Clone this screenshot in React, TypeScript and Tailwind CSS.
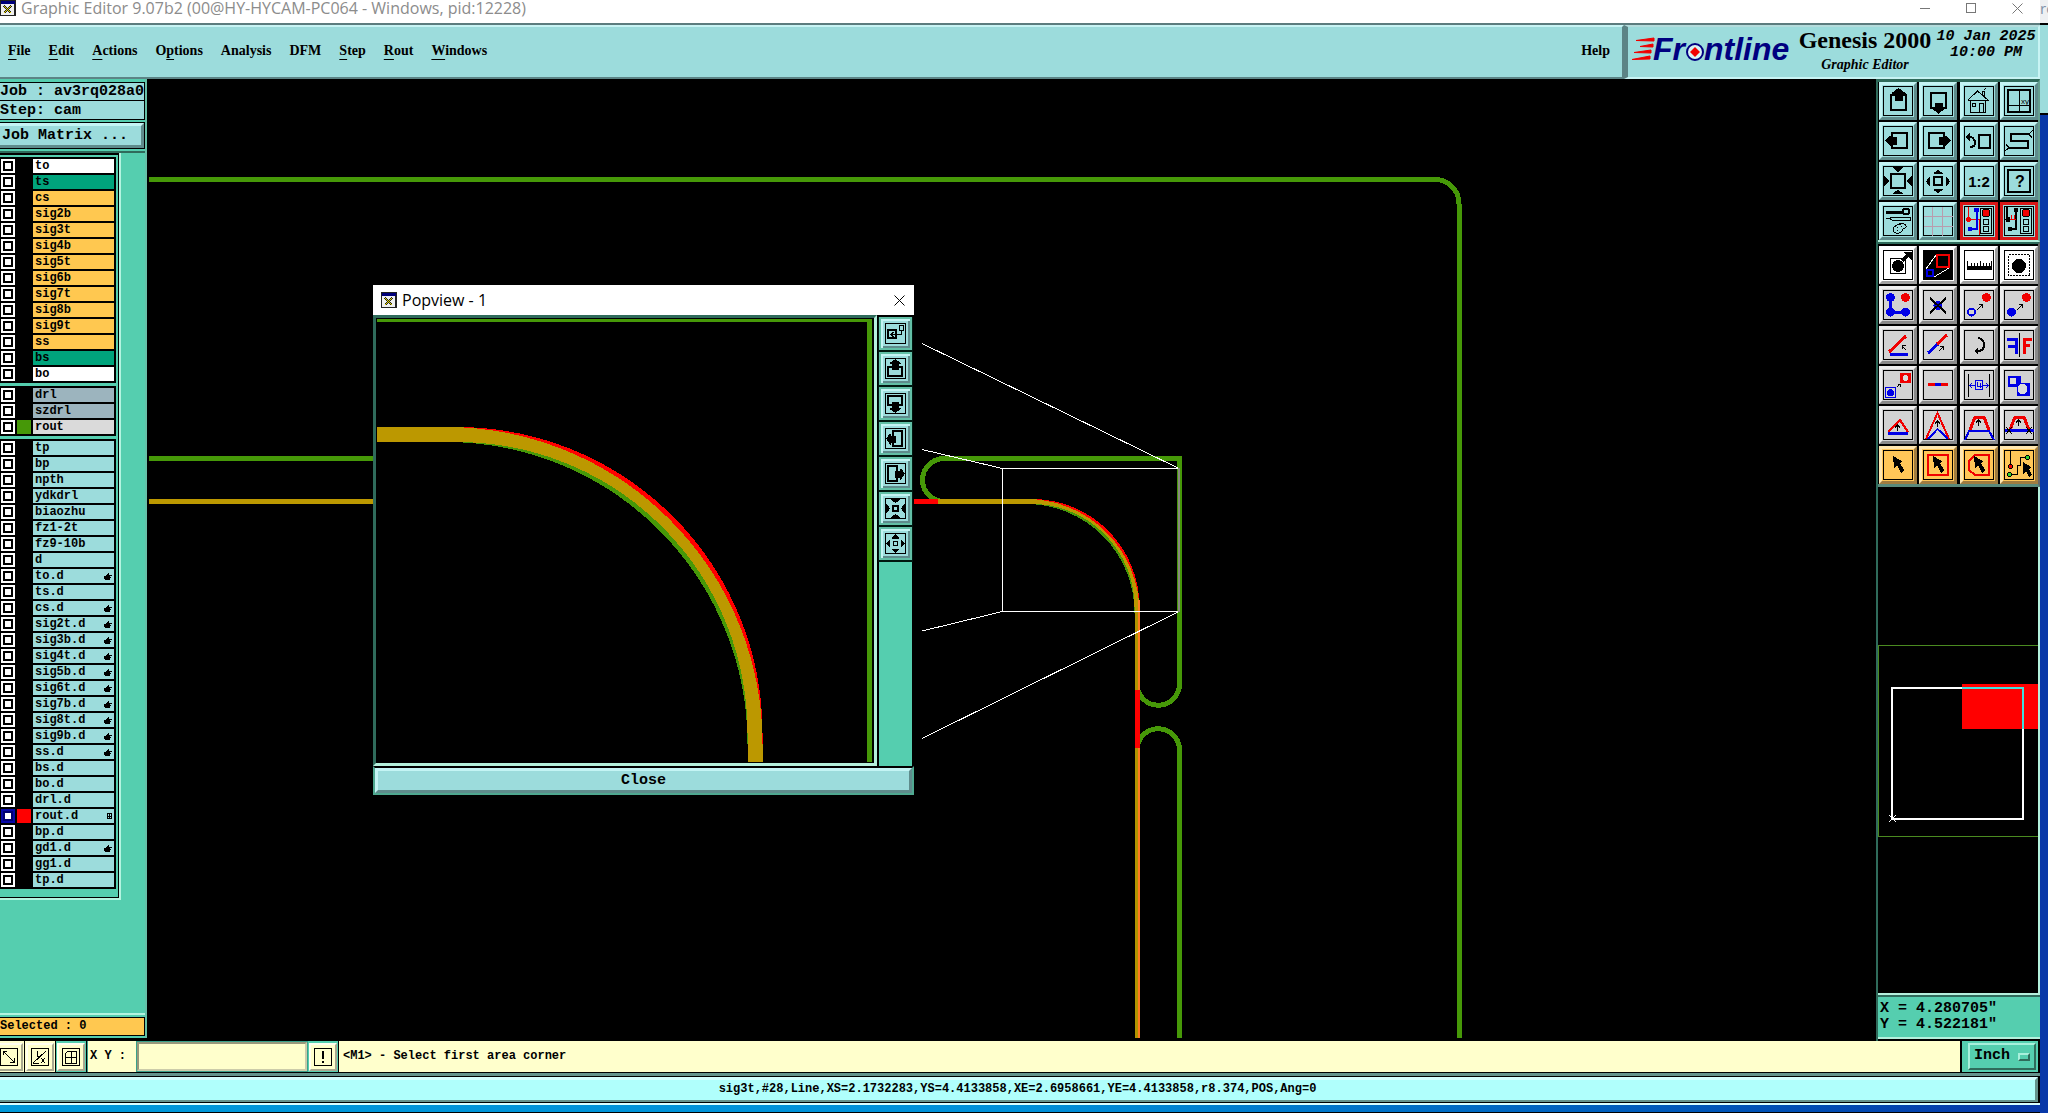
import { type ReactNode } from "react";
import clsx from "clsx";

type Layer = {
  name: string;
  tone?: "white" | "green" | "orange" | "slate" | "gray";
  swatch?: "green" | "red";
  mark?: "hand" | "grid";
  active?: boolean;
};

const tones = {
  white: "bg-white",
  green: "bg-[#00a47c]",
  orange: "bg-[#ffc850]",
  slate: "bg-[#9cb4be]",
  gray: "bg-[#dadada]",
};

const orange = (name: string): Layer => ({ name, tone: "orange" });
const hand = (name: string): Layer => ({ name, mark: "hand" });

const layerGroups: Layer[][] = [
  [
    { name: "to", tone: "white" },
    { name: "ts", tone: "green" },
    ...["cs", "sig2b", "sig3t", "sig4b", "sig5t", "sig6b", "sig7t", "sig8b", "sig9t", "ss"].map(orange),
    { name: "bs", tone: "green" },
    { name: "bo", tone: "white" },
  ],
  [
    { name: "drl", tone: "slate" },
    { name: "szdrl", tone: "slate" },
    { name: "rout", tone: "gray", swatch: "green" },
  ],
  [
    { name: "tp" },
    { name: "bp" },
    { name: "npth" },
    { name: "ydkdrl" },
    { name: "biaozhu" },
    { name: "fz1-2t" },
    { name: "fz9-10b" },
    { name: "d" },
    hand("to.d"),
    { name: "ts.d" },
    ...["cs.d", "sig2t.d", "sig3b.d", "sig4t.d", "sig5b.d", "sig6t.d", "sig7b.d", "sig8t.d", "sig9b.d", "ss.d"].map(hand),
    { name: "bs.d" },
    { name: "bo.d" },
    { name: "drl.d" },
    { name: "rout.d", swatch: "red", mark: "grid", active: true },
    { name: "bp.d" },
    hand("gd1.d"),
    { name: "gg1.d" },
    { name: "tp.d" },
  ],
];

const menus: [string, number][] = [
  ["File", 0],
  ["Edit", 0],
  ["Actions", 0],
  ["Options", 1],
  ["Analysis", -1],
  ["DFM", -1],
  ["Step", 0],
  ["Rout", 0],
  ["Windows", 0],
];

const RED = "#f00000";
const BLUE = "#0000e6";

/* ---------- icon parts ---------- */

function Box({ x, y, w, h, s = 2, c = "#000", f = "none" }: { x: number; y: number; w: number; h: number; s?: number; c?: string; f?: string }) {
  return <rect x={x} y={y} width={w} height={h} stroke={c} strokeWidth={s} fill={f} />;
}

function Line({ d, c = "#000", s = 1 }: { d: string; c?: string; s?: number }) {
  return <path d={d} stroke={c} strokeWidth={s} fill="none" />;
}

function Dot({ x, y, r, c = "#000" }: { x: number; y: number; r: number; c?: string }) {
  return <circle cx={x} cy={y} r={r} fill={c} />;
}

const cursor = <path d="M14 10l9 5-2 2 4 7-3 3-4-8-3 3z" />;

function TrafficLight() {
  return (
    <>
      <Box x={20.5} y={6.5} w={11} h={25} s={1} />
      <circle cx={26} cy={11} r={4} fill={RED} stroke="#000" />
      <circle cx={26} cy={20} r={3} fill="none" stroke="#000" />
      <circle cx={26} cy={27} r={3} fill="none" stroke="#000" />
    </>
  );
}

const viewTools: [string, ReactNode][] = [
  ["Pan up", <><Box x={12} y={13} w={15} h={15} /><path d="M19.500 6l7 5v1h-3v7h-8v-7h-3v-1z" /></>],
  ["Pan down", <><Box x={12} y={11} w={15} h={15} /><path d="M15.500 21h8v4h3v1l-7 6-7-6v-1h3z" /></>],
  ["Home", <><Line d="M8 18.500h21M8 18L17.500 9 28 18M10.500 18v12.500h15V18M12.500 21.500h3v3h-3zM19.500 30v-8.500h4V30M22.500 13V9.500h2V15M24 8l2-2" /></>],
  ["Coordinates", <><Box x={8} y={8} w={22} h={22} /><Line d="M19.500 8v22M8 23.500h22" /><text x={21} y={22} fontSize={8} className="font-['Liberation_Sans']">xy</text></>],
  ["Pan left", <><Box x={13} y={11} w={15} h={15} /><path d="M6 18.500l5-5h1v1h6v8h-6v1h-1z" /></>],
  ["Pan right", <><Box x={10} y={11} w={15} h={15} /><path d="M32 18.500l-5-5h-1v1h-6v8h6v1h1z" /></>],
  ["Previous view", <><Box x={19} y={13} w={11} h={13} /><Line d="M8 15h3q4 2 4 6 0 4-5 4" s={2} /><path d="M5 15l5-5v10z" /></>],
  ["Serpentine", <><Line d="M30 12H11v7h17v7H9" s={2} /><Line d="M29 12l4-4M29 12l3 4M9 26l-4 3M9 26l-3-4" /></>],
  ["Zoom out", <><Box x={12} y={12} w={14} h={14} /><path d="M14 5h10v1l-5 4-5-4zM14 32h10v-1l-5-3-5 3zM5 14v10h1l4-5-4-5zM33 14v10h-1l-4-5 4-5z" /></>],
  ["Zoom in", <><Box x={15} y={15} w={8} h={8} /><path d="M14.500 12h9v-1l-4.500-3-4.500 3zM14.500 27h9v1l-4.500 3-4.500-3zM11 15v9h-1l-3-4.500 3-4.500zM27 15v9h1l3-4.500-3-4.500z" /></>],
  ["Zoom 1:2", <text x={19} y={25} fontSize={15} textAnchor="middle" className="font-['Liberation_Sans'] font-bold">1:2</text>],
  ["Help on item", <><Box x={8} y={8} w={22} h={22} /><text x={20} y={25} fontSize={16} textAnchor="middle" className="font-['Liberation_Sans'] font-bold">?</text></>],
  ["Preferences", <><Line d="M7 10h16" s={3} /><circle cx={27} cy={9.500} r={3} fill="none" stroke="#000" strokeWidth={2} /><Line d="M7 16.500h4l2-1.500h18v3H13l-2-1.500M17 31q-4-1-2-6 4-4 10-3 4 2 1 4-3 1-3 3-2 3-6 2zM18 25h1M22 24h1M18 28h1" /></>],
  ["Grid", <Line d="M13.500 5v29M23.500 5v29M5 14.500h29M5 24.500h29" c="#b89cae" />],
  ["Snap", <><Line d="M8.500 5v12.500H19V33" c={RED} /><Line d="M16.500 8v10M16.500 16v11H10" c={BLUE} s={2} /><Dot x={16.500} y={8} r={2.500} c={BLUE} /><Dot x={10} y={27} r={2.500} c={BLUE} /><Dot x={8.500} y={17.500} r={2.500} c={RED} /><TrafficLight /></>],
  ["Clearance", <><Line d="M7 5v12M16 8v19H10" s={2} /><Line d="M9 17h7M11.500 13v4M14.500 13v4" c={RED} /><Dot x={16} y={8} r={2.500} /><Dot x={10} y={27} r={2.500} /><Dot x={8} y={17.500} r={2.500} /><TrafficLight /></>],
];

const stepArrow = <Line d="M17 24l5-5M19 18.500h3.500V22" />;
const upArrow = (y: number) => <Line d={`M18.500 ${y + 6}V${y}M16 ${y + 2.5}l2.500-2.500 2.500 2.500`} />;

const editTools: [string, ReactNode][] = [
  ["Feature", <><Box x={11.500} y={12.500} w={15} h={15} s={1} /><Dot x={19} y={20} r={6} /><Line d="M23 15l6-6" s={3} /><path d="M24 6h9v8z" /></>],
  ["Popview", <><rect x={4} y={4} width={30} height={30} /><Box x={18} y={9} w={12} h={12} c={RED} /><Box x={8} y={24} w={6} h={6} c={BLUE} /><Line d="M17 9L7 23M30 22L15 31" c="#fff" /></>],
  ["Measure", <><path d="M7 20h25v4H7z" /><Line d="M7.500 15v6M11 17v4M14 17v4M17 17v4M20 15v6M23 17v4M26 17v4M29 17v4M31.500 15v6" /></>],
  ["Select point", <><rect x={8.500} y={8.500} width={21} height={21} fill="none" stroke="#000" strokeDasharray="2 1" /><Dot x={19} y={20} r={7} /></>],
  ["Copy chain", <><Line d="M11.500 11v15h15" c={BLUE} s={3} /><Dot x={11.500} y={11.500} r={4.500} c={BLUE} /><Dot x={11.500} y={26} r={4.500} c={BLUE} /><Dot x={26.500} y={26} r={4.500} c={BLUE} /><Dot x={26.500} y={11.500} r={4.500} c={RED} /></>],
  ["Delete", <><Dot x={19} y={19.500} r={4.500} c={BLUE} /><Line d="M11 12l16 15M27 12L11 27" s={2} /></>],
  ["Move", <><circle cx={11.500} cy={26} r={3.500} fill="none" stroke={BLUE} strokeWidth={2} /><Dot x={26.500} y={11.500} r={4.500} c={RED} />{stepArrow}</>],
  ["Copy", <><Dot x={11.500} y={26} r={4.500} c={BLUE} /><Dot x={26.500} y={11.500} r={4.500} c={RED} />{stepArrow}</>],
  ["Rotate", <><Line d="M10 26L27 10" c={RED} s={3} /><Line d="M11 28.500h18" c={BLUE} s={3} /><Line d="M27 24l-4-4M23 23v-3.500h3.500" /></>],
  ["Stretch", <><Line d="M9 27l10-9" c={BLUE} s={3} /><Line d="M18 18l10-9" c={RED} s={3} /><Line d="M20 25l4-4M21 20.500h3.500V24" /></>],
  ["Undo", <><Line d="M18 12q6 1 6 7 0 6-7 6" s={2} /><path d="M14 25l4-3v6z" /></>],
  ["Mirror", <><Line d="M7 13h9v15M8 20h8" c={BLUE} s={3} /><Line d="M32 13h-8v15M24 19.500h6" c={RED} s={3} /><Line d="M19.500 7v24" /></>],
  ["Transform", <><rect x={21} y={7} width={11} height={10} fill={RED} /><Dot x={26.500} y={12} r={3} c="#dadada" /><Box x={6.500} y={21.500} w={10} h={10} s={1} c={BLUE} /><Dot x={11.500} y={26.500} r={3.500} c={BLUE} /><Line d="M18 21l3-3M18.500 18h3v3" /></>],
  ["Break line", <><Line d="M9 18.500h20" c={RED} s={3} /><Line d="M16 18.500h6" c={BLUE} s={3} /></>],
  ["Spacing", <><Line d="M8.500 8v23M29.500 8v23" /><Box x={15.500} y={14.500} w={7} h={9} s={1} c={BLUE} /><Line d="M9 19.500h6M23 19.500h6M12 17l-2.500 2.500L12 22M26 17l2.500 2.500L26 22M17.500 16v4h4M20.500 17v5" c={BLUE} /></>],
  ["Merge", <><path d="M8 10h13v7h9v13H17v-9H8z" fill={BLUE} /><Dot x={13} y={15} r={3.500} c="#dadada" /><Dot x={22.500} y={23} r={5} c="#dadada" /></>],
  ["Triangle", <><Line d="M9 26l12-12 8 12" c={RED} s={2} /><Line d="M9 27h20" c={BLUE} s={3} />{upArrow(19)}</>],
  ["Peak", <><Line d="M7 33L18.500 7 30 33" c={RED} s={2} /><Line d="M9 33l9.500-10L29 33" c={BLUE} s={2} />{upArrow(15)}</>],
  ["Trapezoid", <><Line d="M10 24l5-13h9l5 13" c={RED} s={3} /><Line d="M5 34l4-9h20l5 9" c={BLUE} s={2} />{upArrow(14)}</>],
  ["Trim", <><Line d="M10 24l5-13h9l5 13" c={RED} s={3} /><Line d="M5 24.500h29" c={BLUE} s={3} /><Line d="M6 21l6 7M12 21l-6 7M26 21l6 7M32 21l-6 7" />{upArrow(14)}</>],
];

const selectTools: [string, ReactNode][] = [
  ["Select", cursor],
  ["Select in box", <><Box x={9} y={9} w={20} h={20} c={RED} />{cursor}</>],
  ["Select in polygon", <><Line d="M15 9h14v20H15l-6-5V15z" c={RED} s={2} />{cursor}</>],
  ["Select net", <><Line d="M10.500 5v16" /><Line d="M10 28.500h7v-9h3v-8h6" /><circle cx={10.500} cy={20.500} r={2} fill={RED} stroke="#000" /><circle cx={27.500} cy={11.500} r={2} fill="#30d030" stroke="#000" /><circle cx={9.500} cy={28.500} r={2} fill="#30d030" stroke="#000" /><path d="M23 16l8 5-2 2 3 6-3 2-3-6-3 3z" /></>],
];

const popTools: [string, ReactNode][] = [
  ["Reposition", <><Box x={9} y={13} w={8} h={8} /><Box x={20.500} y={8.500} w={4} h={5} s={1} /><Line d="M22.500 13v4.500H12M14.500 15l-2.500 2.500 2.500 2.500" /></>],
  ["Up", <><Box x={9} y={15} w={14} h={9} /><path d="M16.500 7l5 4v1h-2v6h-7v-6h-2v-1z" /></>],
  ["Down", <><Box x={9} y={9} w={14} h={9} /><path d="M16.500 26l5-4v-1h-2v-6h-7v6h-2v1z" /></>],
  ["Left", <><Box x={14} y={9} w={9} h={15} /><path d="M7 16.500l4-5h1v2h5v7h-5v2h-1z" /></>],
  ["Right", <><Box x={9} y={9} w={9} h={15} /><path d="M26 16.500l-4-5h-1v2h-5v7h5v2h1z" /></>],
  ["Shrink", <><Box x={14} y={14} w={5} h={5} /><path d="M12 7h9v1l-4.500 3L12 8zM12 26h9v-1l-4.500-3-4.500 3zM7 12v9h1l3-4.500L8 12zM26 12v9h-1l-3-4.500 3-4.500z" /></>],
  ["Expand", <><Box x={14.500} y={14.500} w={4} h={4} s={1} /><path d="M13 12h7v-1l-3.500-4-3.500 4zM13 22h7v1l-3.500 3-3.500-3zM11 13v7h-1l-3-3.500 3-3.500zM22 13v7h1l3-3.500-3-3.500z" /></>],
];

/* ---------- widgets ---------- */

function WindowIcon() {
  return (
    <svg width="16" height="16" viewBox="0 0 16 16" shapeRendering="crispEdges">
      <rect width="16" height="16" fill="#222" />
      <rect x="1" y="1" width="14" height="3" fill="#00007a" />
      <rect x="1" y="4" width="13" height="11" fill="#f0f0f0" />
      <path d="M4 6l7 7M11 6l-7 7" stroke="#222" strokeWidth="2" />
      <path d="M4 6l7 7M11 6l-7 7" stroke="#e8d800" />
    </svg>
  );
}

function ToolButton({ label, tone, children }: { label: string; tone: "teal" | "gray" | "white" | "orange" | "red"; children: ReactNode }) {
  return (
    <button
      aria-label={label}
      className={clsx(
        "size-[38px] border-3",
        tone === "teal" && "border-t-[#c4f4f4] border-l-[#c4f4f4] border-r-[#5f8c8c] border-b-[#5f8c8c] bg-[#9cdcdc]",
        tone === "gray" && "border-t-[#efefef] border-l-[#efefef] border-r-[#8a8a8a] border-b-[#8a8a8a] bg-[#d2d2d2]",
        tone === "white" && "border-t-white border-l-white border-r-[#a0a0a0] border-b-[#a0a0a0] bg-white",
        tone === "orange" && "border-t-[#ffe6b0] border-l-[#ffe6b0] border-r-[#a07c40] border-b-[#a07c40] bg-[#ffc658]",
        tone === "red" && "border-[#d81818] bg-[#9cdcdc]"
      )}
    >
      <svg width="32" height="32" viewBox="3 3 32 32" shapeRendering="crispEdges">
        <rect x="4.5" y="4.5" width="29" height="29" fill="none" stroke="#000" />
        {children}
      </svg>
    </button>
  );
}

function TitleBar() {
  return (
    <div className="flex h-[23px] shrink-0 items-start bg-white">
      <div className="flex h-4 items-center gap-[5px]">
        <WindowIcon />
        <span className="font-['Open_Sans',sans-serif] text-[16px] leading-4 whitespace-nowrap text-[#8c8c8c]">
          Graphic Editor 9.07b2 (00@HY-HYCAM-PC064 - Windows, pid:12228)
        </span>
      </div>
      <div className="ml-auto flex text-[#777]">
        <button aria-label="Minimize" className="flex h-4 w-[46px] items-center justify-center">
          <svg width="10" height="11"><path d="M0 5.500h10" stroke="currentColor" /></svg>
        </button>
        <button aria-label="Maximize" className="flex h-4 w-[46px] items-center justify-center">
          <svg width="11" height="11"><rect x=".5" y=".5" width="9" height="9" fill="none" stroke="currentColor" /></svg>
        </button>
        <button aria-label="Close window" className="flex h-4 w-[46px] items-center justify-center">
          <svg width="11" height="11"><path d="M.5.5l10 10M10.500.5l-10 10" stroke="currentColor" /></svg>
        </button>
      </div>
    </div>
  );
}

function FrontlineLogo() {
  return (
    <svg width="164" height="44" viewBox="0 -8 164 44" role="img" aria-label="Frontline">
      <path d="M4 5.500L22 3v3zM8 11.500L21 9v3zM2 17.500L19 15v3zM0 24.500L18 21v3z" fill={RED} stroke={RED} />
      <g fill="#000080" className="font-['Liberation_Sans',sans-serif] text-[32px] font-bold italic">
        <text x="21" y="25">Fr</text>
        <text x="72" y="25">ntline</text>
      </g>
      <circle cx="63" cy="17" r="8" fill="#d8f4f4" stroke="#000080" strokeWidth="2" />
      <path d="M63 12l5 5-5 5-5-5z" fill={RED} />
    </svg>
  );
}

function Header() {
  return (
    <header className="flex h-14 shrink-0 border-t-2 border-[#5c7c7e] bg-[#9cdcdc] text-black">
      <nav className="flex flex-1 items-center border-2 border-l-0 border-t-[#c8f4f4] border-r-[#5c8486] border-b-[#5c8486] pb-[3px] font-['Liberation_Serif',serif] text-[14px] font-bold">
        {menus.map(([name, key]) => (
          <button key={name} className="px-[9px] leading-4 first:pl-2">
            {key < 0 ? (
              name
            ) : (
              <>
                {name.slice(0, key)}
                <u className="underline-offset-4">{name[key]}</u>
                {name.slice(key + 1)}
              </>
            )}
          </button>
        ))}
        <button className="mr-1 ml-auto px-2 leading-4">Help</button>
      </nav>
      <div className="flex w-[416px] border-2 border-l-4 border-t-[#b4dcdc] border-r-[#c8f4f4] border-b-[#c8f4f4] border-l-[#5c8486]">
        <div className="pl-1">
          <FrontlineLogo />
        </div>
        <div className="w-[138px] text-center font-['Liberation_Serif',serif] font-bold">
          <div className="text-[24px] leading-[26px] whitespace-nowrap">Genesis 2000</div>
          <div className="text-[14px] leading-6 italic">Graphic Editor</div>
        </div>
        <div className="flex-1 pt-0.5 text-center font-['Liberation_Mono',monospace] text-[15px] leading-4 font-bold whitespace-nowrap italic">
          <div>10 Jan 2025</div>
          <div>10:00 PM</div>
        </div>
      </div>
    </header>
  );
}

function LayerRow({ layer }: { layer: Layer }) {
  return (
    <div className="flex h-4 items-center gap-[2px] pr-[2px] pl-px">
      <input
        type="checkbox"
        aria-label={`Show ${layer.name}`}
        defaultChecked={layer.active}
        className={clsx(
          "size-[14px] shrink-0 appearance-none border-2 bg-white",
          layer.active ? "border-[#0808a8] inset-shadow-[0_0_0_2px_#000070]" : "border-white inset-shadow-[0_0_0_2px_#000]"
        )}
      />
      <span
        className={clsx(
          "size-[14px] shrink-0",
          layer.swatch === "green" && "bg-[#469808]",
          layer.swatch === "red" && "bg-[#ff0000]"
        )}
      />
      <button className={clsx("flex h-[14px] flex-1 items-center justify-between px-[2px]", layer.tone ? tones[layer.tone] : "bg-[#9cdcdc]")}>
        <span className="text-[12px] leading-[14px]">{layer.name}</span>
        {layer.mark === "hand" && (
          <svg width="8" height="8" viewBox="0 0 8 8" shapeRendering="crispEdges">
            <path d="M0 4h2V3l2-2h1v2h3v1H6v1h1v1H6v1L5 8H1L0 7z" />
          </svg>
        )}
        {layer.mark === "grid" && (
          <svg width="5" height="6" viewBox="0 0 5 6" shapeRendering="crispEdges">
            <path d="M.5.5h4v5h-4zM2.500 0v6M0 3h5" fill="none" stroke="#000" />
          </svg>
        )}
      </button>
    </div>
  );
}

function LayerPanel() {
  return (
    <aside className="flex w-[147px] shrink-0 flex-col self-start border-r-2 border-[#66c0a8] bg-[#55ceaf] font-['Liberation_Mono',monospace] font-bold">
      <div className="border-b-2 border-[#2f6b5b] pt-[3px] pb-[2px] text-[15px] whitespace-nowrap">
        <div className="h-[19px] border border-l-0 border-black bg-[#9cdcdc] leading-[18px]">
          Job : av3rq028a0
        </div>
        <div className="h-[19px] border border-t-0 border-l-0 border-black bg-[#9cdcdc] leading-5">
          Step: cam
        </div>
        <div className="mt-[2px] border border-l-0 border-black">
          <button className="block h-[25px] w-full border-3 border-l-0 border-t-[#c4f4f4] border-r-[#5f8c8c] border-b-[#5f8c8c] bg-[#9cdcdc] pl-[2px] text-left leading-5">
            Job Matrix ...
          </button>
        </div>
      </div>
      <div className="w-[121px] border-r-2 border-b-2 border-[#b4f4e0]">
        <div className="flex flex-col gap-[3px] border-t-2 border-r border-b border-black pt-[2px] pr-[2px] pb-[8px]">
          {layerGroups.map((group, i) => (
            <div key={i} className="bg-black py-px">
              {group.map((layer) => (
                <LayerRow key={layer.name} layer={layer} />
              ))}
            </div>
          ))}
        </div>
      </div>
      <div className="mt-[113px] border-t-2 border-[#b4f4e0] pt-[2px] pb-[2px] text-[12px]">
        <div className="h-[19px] border border-l-0 border-black bg-[#ffc850] leading-[17px]">Selected : 0</div>
      </div>
    </aside>
  );
}

/* Board outline and rout paths, in window coordinates. */
function BoardCanvas() {
  return (
    <svg className="absolute inset-0 h-full w-full" fill="none" shapeRendering="crispEdges">
      <defs>
        <mask id="rout-d" maskUnits="userSpaceOnUse" x="0" y="0" width="2000" height="1200">
          <path d="M914 501.500h118a105 105 0 0 1 105 105V684" stroke="#fff" strokeWidth="5" />
        </mask>
      </defs>
      <g transform="translate(-147 -79)">
        <g stroke="#469808" strokeWidth="5">
          <path d="M149 179.500H1435a24 24 0 0 1 24 24V1038" />
          <path d="M149 458.500H380" />
          <path d="M1137 1038V750a21.250 21.250 0 0 1 42.500 0V1038" />
          <path d="M944 501.500a21.500 21.500 0 0 1 0-43H1179.500V684a21.250 21.250 0 0 1-42.500 0" />
        </g>
        <path d="M149 501.500H380" stroke="#bc9800" strokeWidth="5" />
        <path d="M914 501.500h118a105 105 0 0 1 105 105V1038" stroke="#ff0000" strokeWidth="5" />
        <path d="M938 501.500h88a111 111 0 0 1 111 111V684" stroke="#469808" strokeWidth="5" />
        <path d="M938 501.500h88a111 111 0 0 1 111 111V684" stroke="#bc9800" strokeWidth="5" mask="url(#rout-d)" />
        <path d="M1136 612V690M1136 748V1038" stroke="#b09400" strokeWidth="3" />
        <path d="M1138.500 600V690M1138.500 748V1038" stroke="#ff7a20" strokeWidth="2" />
        <g stroke="#fff">
          <path d="M922 343.500L1179 468.500M922 449.500l80.500 19M922 631l80.500-19.500M922 738.500L1179 611.500" />
          <path d="M1179.500 468.500h-177v143h177" />
          <path d="M1178.500 468V612" stroke="#8a8a80" strokeWidth="2" />
        </g>
      </g>
    </svg>
  );
}

function Popview() {
  return (
    <section aria-label="Popview - 1" className="absolute top-[206px] left-[226px] w-[541px] bg-[#55ceaf]">
      <div className="flex h-[30px] items-center gap-[5px] bg-white pl-2">
        <WindowIcon />
        <span className="font-['Open_Sans',sans-serif] text-[16px] leading-5 text-black">Popview - 1</span>
        <button aria-label="Close popview" className="ml-auto flex h-full w-[30px] items-center justify-center">
          <svg width="11" height="11"><path d="M.5.5l10 10M10.500.5l-10 10" stroke="#000" /></svg>
        </button>
      </div>
      <div className="flex">
        <div className="flex-1 border-3 border-t-[#2f6b5b] border-l-[#2f6b5b] border-r-[#b4f0dc] border-b-[#b4f0dc] bg-black">
          <svg className="block h-[445px] w-full" viewBox="376 318 498 445" preserveAspectRatio="xMinYMin slice" fill="none" shapeRendering="crispEdges">
            <mask id="pop-rout" maskUnits="userSpaceOnUse" x="300" y="300" width="700" height="600">
              <path d="M377 434.500H457a298 298 0 0 1 298 298V762" stroke="#fff" strokeWidth="15" />
            </mask>
            <path d="M377 320.500H869.500" stroke="#469808" strokeWidth="3" />
            <path d="M869.500 319V762" stroke="#469808" strokeWidth="5" />
            <path d="M377 434.500H457a298 298 0 0 1 298 298V762" stroke="#ff0000" strokeWidth="15" />
            <path d="M377 434.500H446a309 309 0 0 1 309 309V762" stroke="#469808" strokeWidth="15" />
            <path d="M377 434.500H446a309 309 0 0 1 309 309V762" stroke="#bc9800" strokeWidth="15" mask="url(#pop-rout)" />
          </svg>
        </div>
        <div className="flex w-[37px] flex-col gap-[2px] border-t-2 border-r-2 border-l-2 border-black">
          {popTools.map(([label, icon]) => (
            <button
              key={label}
              aria-label={label}
              className="size-[33px] border-2 border-[#62bfa6] bg-[#9cdcdc] shadow-[0_1px_0_1px_#001810] inset-shadow-[2px_2px_0_#c4f4f4,-2px_-2px_0_#5f8c8c]"
            >
              <svg width="29" height="29" viewBox="2 2 29 29" shapeRendering="crispEdges">
                <rect x="6.5" y="6.5" width="20" height="20" fill="none" stroke="#000" />
                {icon}
              </svg>
            </button>
          ))}
        </div>
      </div>
      <div className="border-2 border-[#4fa890] border-t-black">
        <button className="block h-[25px] w-full border-3 border-t-[#c4f4f4] border-l-[#c4f4f4] border-r-[#5f8c8c] border-b-[#5f8c8c] bg-[#9cdcdc] font-['Liberation_Mono',monospace] text-[15px] leading-[19px] font-bold">
          Close
        </button>
      </div>
    </section>
  );
}

function ToolPalette() {
  return (
    <aside className="flex w-[164px] shrink-0 flex-col border-l-2 border-[#2f6b5b] bg-black">
      <div className="border-t-3 border-r-2 border-b-2 border-t-[#2f6b5b] border-r-[#66a090] border-b-[#b4f0dc]">
        <div className="grid grid-cols-4 gap-[2px] pl-px">
          {viewTools.map(([label, icon], i) => (
            <ToolButton key={label} label={label} tone={i > 13 ? "red" : "teal"}>
              {icon}
            </ToolButton>
          ))}
        </div>
      </div>
      <div className="border-t-2 border-r-2 border-b-3 border-t-[#2f6b5b] border-r-[#666] border-b-[#5a8a7c] pt-[2px]">
        <div className="grid grid-cols-4 gap-[2px] pl-px">
          {editTools.map(([label, icon], i) => (
            <ToolButton key={label} label={label} tone={i < 4 ? "white" : "gray"}>
              {icon}
            </ToolButton>
          ))}
          {selectTools.map(([label, icon]) => (
            <ToolButton key={label} label={label} tone="orange">
              {icon}
            </ToolButton>
          ))}
        </div>
      </div>
      <div className="min-h-0 flex-1 border-r-2 border-b-2 border-[#b4f0dc] bg-black">
        {/* overview map */}
        <svg className="h-full w-full" fill="none" shapeRendering="crispEdges">
          <path d="M.5 158v191M0 158.500h160M0 349.500h160" stroke="#4a8a20" />
          <rect x="84" y="197" width="76" height="45" fill="#ff0000" />
          <rect x="14" y="201" width="131" height="131" stroke="#fff" strokeWidth="2" />
          <path d="M84 201h61v41" stroke="#40e0e0" strokeWidth="2" />
          <path d="M11 328l7 7M18 328l-7 7" stroke="#fff" />
        </svg>
      </div>
      <div className="mb-[2px] border-t-2 border-b-2 border-t-[#2f6b5b] border-b-[#b4f0dc] bg-[#55ceaf] py-1 pl-[2px] font-['Liberation_Mono',monospace] text-[15px] leading-4 font-bold whitespace-pre">
        <div>X = 4.280705"</div>
        <div>Y = 4.522181"</div>
      </div>
    </aside>
  );
}

function ModeButton({ label, on, children }: { label: string; on?: boolean; children: ReactNode }) {
  return (
    <div className={clsx("flex h-full items-center justify-center border-r border-black px-px", on ? "bg-[#55ceaf]" : "bg-[#ffffcc]")}>
      <button aria-label={label} className="border-2 border-t-[#fffff0] border-l-[#fffff0] border-r-[#a8a890] border-b-[#a8a890] bg-[#ffffcc] p-0.5">
        <svg width="20" height="20" viewBox="0 0 20 20" fill="none" stroke="#000" shapeRendering="crispEdges">
          <rect x="1.5" y="1.5" width="17" height="17" />
          {children}
        </svg>
      </button>
    </div>
  );
}

function CommandBar() {
  return (
    <div className="flex h-8 shrink-0 border-b border-black bg-[#ffffcc] font-['Liberation_Mono',monospace] text-[12px] font-bold">
      <div className="-ml-1.5 flex">
        <ModeButton label="Line mode"><path d="M4 4l11 11M4 8V4h4M11 15h4v-4" /></ModeButton>
        <ModeButton label="Angle mode"><path d="M3 16L16 4M3 16h6M7 4v5h3M15 11l-4 5M11 11l4 5" /></ModeButton>
        <ModeButton label="Grid snap" on><path d="M7 4h8v12H4V7zM10 4v12M4 10h11" /></ModeButton>
      </div>
      <label htmlFor="xy" className="w-[49px] border-l border-[#3aa08a] pl-[2px] leading-[30px] whitespace-nowrap">
        X Y :
      </label>
      <input
        id="xy"
        className="w-[172px] border-3 border-t-[#98987c] border-l-[#98987c] border-r-[#ccccaa] border-b-[#ccccaa] bg-[#ffffcc] px-1 outline-1 -outline-offset-1 outline-[#3aa08a]"
      />
      <ModeButton label="Apply" on><path d="M10 4v8M10 14v2" strokeWidth="2" /></ModeButton>
      <div className="flex-1 pl-1 leading-[30px]">&lt;M1&gt; - Select first area corner</div>
      <div className="w-[80px] border-r-2 border-l-2 border-black bg-[#55ceaf] p-[2px] pl-1.5">
        <label className="flex h-[27px] items-center border-2 border-t-[#a8f0dc] border-l-[#a8f0dc] border-r-[#2f6b5b] border-b-[#2f6b5b] pr-1 pl-1 text-[15px]">
          <select aria-label="Units" defaultValue="Inch" className="min-w-0 flex-1 appearance-none bg-transparent">
            <option>Inch</option>
            <option>MM</option>
          </select>
          <span className="h-2 w-3 shrink-0 border-2 border-t-[#a8f0dc] border-l-[#a8f0dc] border-r-[#2f6b5b] border-b-[#2f6b5b]" />
        </label>
      </div>
    </div>
  );
}

function DesktopEdge() {
  return (
    <div className="flex w-2 shrink-0 flex-col bg-[#0838a8]">
      <div className="h-[23px] overflow-hidden bg-[#eef0f2] font-['Open_Sans',sans-serif] text-[15px] leading-4 text-[#8090a8]">ro</div>
      <div className="h-[92px] border-t-2 border-b-2 border-black bg-[#9cdcdc]" />
    </div>
  );
}

export default function App() {
  return (
    <div className="flex min-h-screen overflow-hidden bg-black">
      <div className="flex min-w-0 flex-1 flex-col">
        <TitleBar />
        <Header />
        <main className="flex flex-1 bg-black">
          <LayerPanel />
          <div className="relative min-w-0 flex-1 overflow-hidden bg-black">
            <BoardCanvas />
            <Popview />
          </div>
          <ToolPalette />
        </main>
        <CommandBar />
        <footer className="h-8 shrink-0 border-t-3 border-b-2 border-t-[#64938c] border-b-[#d8ffff] bg-black pr-[2px]">
          <div className="mt-px h-[25px] border-t-3 border-r-3 border-b-2 border-t-[#d4ffff] border-r-[#64938c] border-b-[#64938c] bg-[#b0fffc] text-center font-['Liberation_Mono',monospace] text-[12px] leading-[18px] font-bold">
            sig3t,#28,Line,XS=2.1732283,YS=4.4133858,XE=2.6958661,YE=4.4133858,r8.374,POS,Ang=0
          </div>
        </footer>
        <div className="h-2 shrink-0 border-b border-black bg-gradient-to-r from-[#0098d8] via-[#0090d8] to-[#0838a8]" />
      </div>
      <DesktopEdge />
    </div>
  );
}
